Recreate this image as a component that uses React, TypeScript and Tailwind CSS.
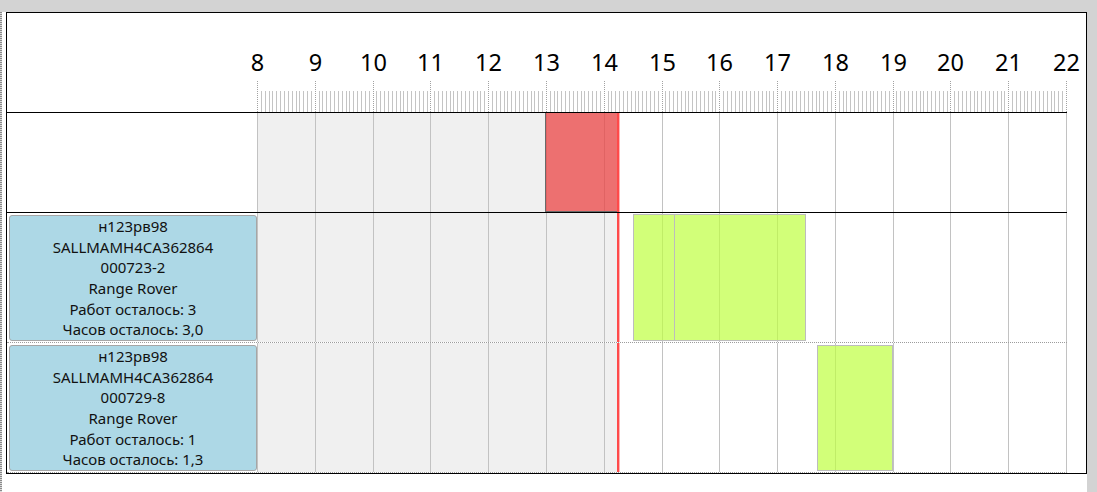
const HOURS = Array.from({ length: 15 }, (_, i) => 8 + i)
const CHART_W = 810
const PX_PER_HOUR = 809 / 14
const NOW_X = 360

const hx = (h: number) => Math.round((h - 8) * PX_PER_HOUR) + 0.5

interface Job {
  plate: string
  vin: string
  order: string
  model: string
  worksLeft: string
  hoursLeft: string
}

const jobs: Job[] = [
  {
    plate: 'н123рв98',
    vin: 'SALLMAMH4CA362864',
    order: '000723-2',
    model: 'Range Rover',
    worksLeft: '3',
    hoursLeft: '3,0',
  },
  {
    plate: 'н123рв98',
    vin: 'SALLMAMH4CA362864',
    order: '000729-8',
    model: 'Range Rover',
    worksLeft: '1',
    hoursLeft: '1,3',
  },
]

function Ruler() {
  const minor: number[] = []
  for (let h = 8; h < 22; h++) {
    for (let k = 1; k < 15; k++) {
      minor.push(Math.round((h - 8 + k / 15) * PX_PER_HOUR) + 0.5)
    }
  }
  return (
    <svg width={CHART_W} height={99} className="block overflow-visible" shapeRendering="crispEdges">
      {HOURS.map((h) => (
        <text
          key={h}
          x={hx(h)}
          y={58}
          textAnchor="middle"
          fontSize={23.5}
          fontFamily="'Noto Sans', sans-serif"
          fill="#000"
        >
          {h}
        </text>
      ))}
      {minor.map((x, i) => (
        <line key={i} x1={x} x2={x} y1={78} y2={99} stroke="#c4c4c4" />
      ))}
      {HOURS.map((h) => (
        <line key={h} x1={hx(h)} x2={hx(h)} y1={68} y2={99} stroke="#a2a2a2" strokeDasharray="1 1" />
      ))}
    </svg>
  )
}

function ChartCell({ height, children }: { height: number; children?: React.ReactNode }) {
  return (
    <svg width={CHART_W} height={height} className="block" shapeRendering="crispEdges">
      <rect x={0} y={0} width={NOW_X} height={height} fill="#f0f0f0" />
      {HOURS.map((h) => (
        <line key={h} x1={hx(h)} x2={hx(h)} y1={0} y2={height} stroke="#c2c2c2" />
      ))}
      {children}
      <rect x={NOW_X} y={0} width={2} height={height} fill="#ff4a4a" />
      <rect x={NOW_X + 2} y={0} width={1} height={height} fill="#ffb4b4" />
    </svg>
  )
}

function JobCard({ job }: { job: Job }) {
  return (
    <div className="h-[126px] w-[248px] rounded-[3px] border border-[#a6a6a6] bg-[#add8e6] flex flex-col items-center justify-center text-[15px] leading-[20.7px] text-[#111]">
      <div>{job.plate}</div>
      <div>{job.vin}</div>
      <div>{job.order}</div>
      <div>{job.model}</div>
      <div>Работ осталось: {job.worksLeft}</div>
      <div>Часов осталось: {job.hoursLeft}</div>
    </div>
  )
}

const GREEN = 'rgba(191,255,64,0.7)'

export default function App() {
  return (
    <div className="w-[1097px] h-[492px] flex bg-white overflow-hidden font-['Noto_Sans',sans-serif]">
      <div className="w-[1087px] flex flex-col">
        <div className="h-[12px] bg-[#d3d3d3]" />
        <div className="flex flex-1">
          <div className="w-[2px] bg-[repeating-linear-gradient(to_bottom,#8a8a8a_0_1px,#dadada_1px_2px)]" />
          <div className="w-[4px]" />
          <div className="w-[1081px] h-[462px] border border-black flex">
            <div className="w-[1060px] flex flex-col">
              {/* ruler */}
              <div className="h-[100px] border-b border-black flex items-end">
                <div className="w-[250px]" />
                <Ruler />
              </div>

              {/* busy row */}
              <div className="h-[100px] border-b border-black flex">
                <div className="w-[250px]" />
                <ChartCell height={99}>
                  <rect x={288} y={0} width={72} height={99} fill="rgba(236,62,62,0.72)" />
                  <line x1={288.5} x2={288.5} y1={0} y2={99} stroke="#6a6a6a" />
                  <line x1={288} x2={360} y1={98.5} y2={98.5} stroke="#6a6a6a" />
                </ChartCell>
              </div>

              {jobs.map((job, i) => (
                <div key={i} className="h-[130px] border-b border-dotted border-[#9c9c9c] flex">
                  <div className="w-[250px] pl-[2px] pt-[2px]">
                    <JobCard job={job} />
                  </div>
                  <ChartCell height={129}>
                    {i === 0 ? (
                      <>
                        <rect x={376.5} y={1.5} width={41} height={126} fill={GREEN} stroke="#bdbdbd" />
                        <rect x={417.5} y={1.5} width={131} height={126} fill={GREEN} stroke="#bdbdbd" />
                      </>
                    ) : (
                      <rect x={560.5} y={2.5} width={75} height={125} fill={GREEN} stroke="#bdbdbd" />
                    )}
                  </ChartCell>
                </div>
              ))}
            </div>
          </div>
        </div>
      </div>
      <div className="w-[10px] bg-[#d3d3d3]" />
    </div>
  )
}
